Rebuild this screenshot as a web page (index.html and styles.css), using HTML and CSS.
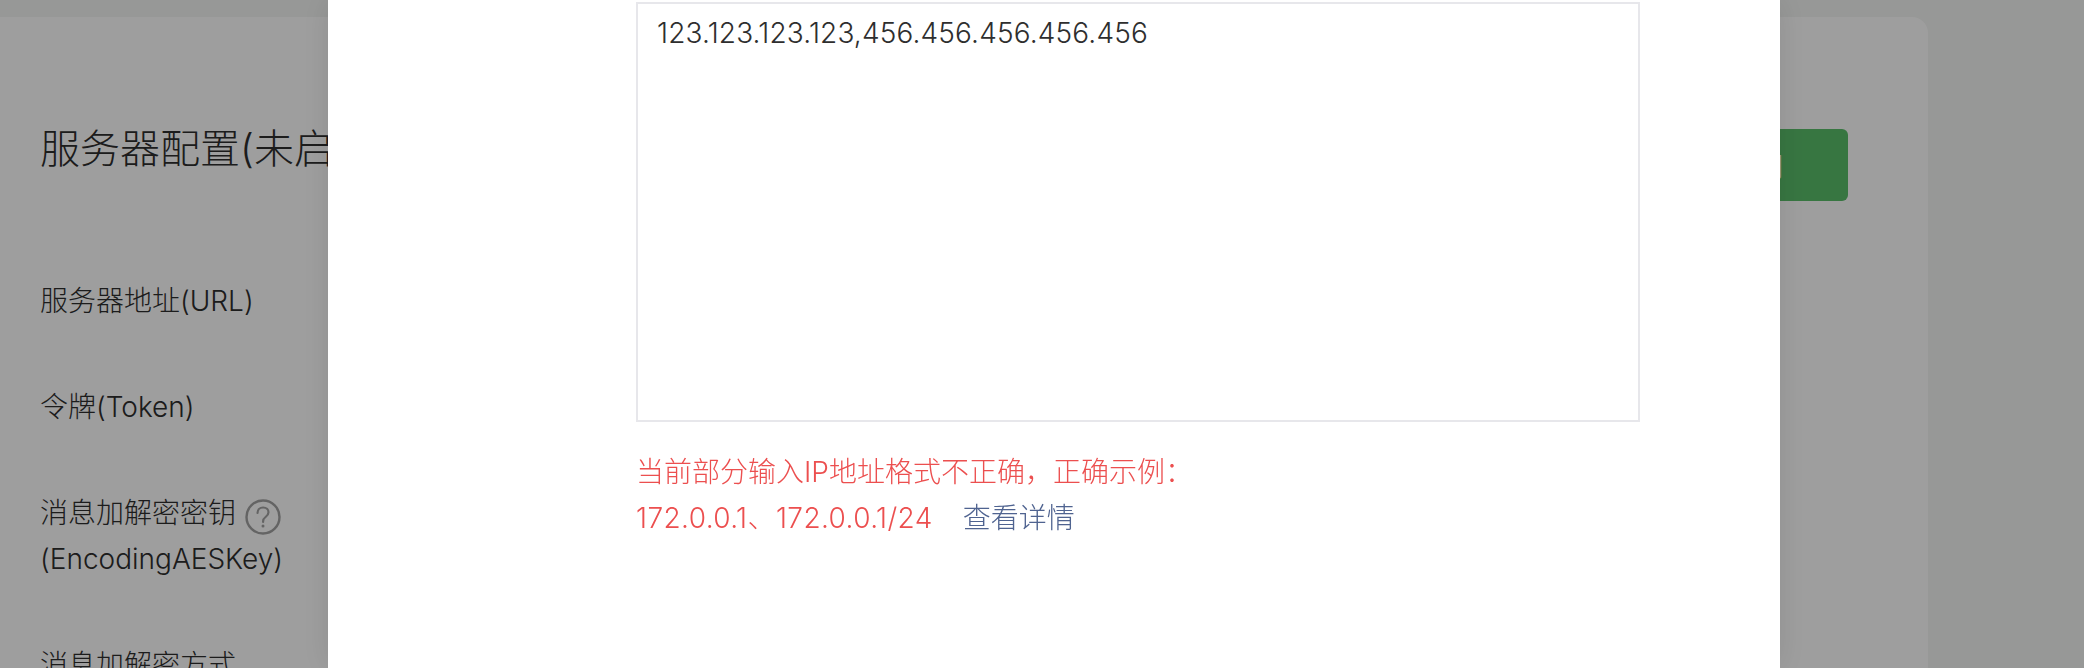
FILE: index.html

```html
<!DOCTYPE html>
<html lang="zh-CN">
<head>
  <meta charset="UTF-8">
  <title>服务器配置</title>
  <link rel="stylesheet" href="styles.css">
</head>
<body>
  <div class="page">
    <div class="card">
      <div class="card-head">
        <h2 class="card-title">服务器配置(未启用)</h2>
        <button class="btn-primary">启用</button>
      </div>
      <div class="field">服务器地址(URL)</div>
      <div class="field">令牌(Token)</div>
      <div class="field">
        消息加解密密钥
        <svg class="help-icon" viewBox="0 0 36 36" fill="none">
          <circle cx="18" cy="18" r="16.5" stroke="#a2a2a2" stroke-width="2.4"/>
          <path d="M12.5 14c0-3.4 2.4-5.5 5.6-5.5s5.4 2 5.4 4.8c0 2.2-1.2 3.4-2.9 4.7-1.6 1.2-2.5 2.1-2.5 4.2v.8" stroke="#a2a2a2" stroke-width="2.2" stroke-linecap="round"/>
          <circle cx="18" cy="27" r="1.5" fill="#a2a2a2"/>
        </svg>
        <br>(EncodingAESKey)
      </div>
      <div class="field">消息加解密方式</div>
    </div>
  </div>

  <div class="mask"></div>

  <div class="dialog">
    <textarea class="ip-input" readonly>123.123.123.123,456.456.456.456.456</textarea>
    <p class="ip-error">当前部分输入IP地址格式不正确，正确示例：<br><span class="ip-sample">172.0.0.1、172.0.0.1/24</span><a class="ip-link" href="#">查看详情</a></p>
  </div>
</body>
</html>
```

FILE: styles.css

```css
* {
  box-sizing: border-box;
  margin: 0;
  padding: 0;
}
html, body {
  height: 100%;
  overflow: hidden;
}
body {
  background: #f4f5f4;
  color: #2e2e2e;
  font-family: Inter, "Noto Sans CJK SC", sans-serif;
  font-weight: 300;
  font-size: 28px;
  line-height: 46px;
}
.page {
  padding-top: 17px;
  padding-right: 156px;
}
.card {
  background: #fff;
  border-radius: 0 16px 16px 0;
  padding: 104px 80px 60px 40px;
}
.card-head {
  display: flex;
  justify-content: space-between;
  align-items: flex-start;
  margin-bottom: 77px;
}
.card-title {
  font-size: 40px;
  font-weight: 300;
  line-height: 56px;
}
.btn-primary {
  width: 184px;
  height: 72px;
  margin-top: 8px;
  border: none;
  border-radius: 6px;
  background: #5abe6a;
  color: #fff;
  font-size: 28px;
}
.field {
  margin-bottom: 60px;
}
.help-icon {
  width: 36px;
  height: 36px;
  margin-left: 1px;
  vertical-align: -12px;
}
.mask {
  position: fixed;
  inset: 0;
  background: rgba(0, 0, 0, 0.38);
}
.dialog {
  position: fixed;
  top: 0;
  bottom: 0;
  left: 328px;
  width: 1452px;
  padding: 2px 140px 0 308px;
  background: #fff;
  box-shadow: 0 0 30px rgba(0, 0, 0, 0.1);
}
.ip-input {
  display: block;
  width: 100%;
  height: 420px;
  padding: 6px 19px;
  border: 2px solid #e7e7eb;
  outline: none;
  resize: none;
  color: #2e2e2e;
  font: inherit;
  letter-spacing: 0.15px;
  line-height: 46px;
}
.ip-error {
  margin-top: 27px;
  color: #ec4f4f;
}
.ip-sample {
  letter-spacing: 0.4px;
}
.ip-link {
  margin-left: 30px;
  color: #4f6390;
  text-decoration: none;
}
```
